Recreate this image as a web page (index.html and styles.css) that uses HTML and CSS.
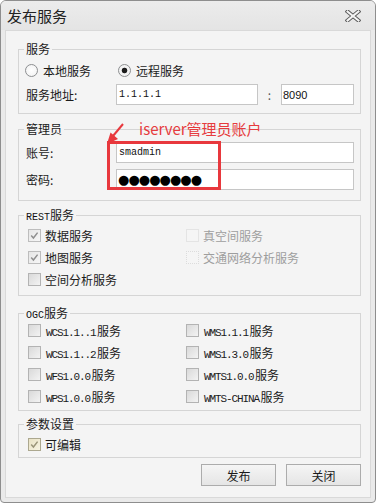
FILE: index.html
```html
<!DOCTYPE html>
<html>
<head>
<meta charset="utf-8">
<title>发布服务</title>
<link rel="stylesheet" href="styles.css">
</head>
<body>
<div class="window">
  <div class="titlebar">
    <span class="title">发布服务</span>
    <span class="close">
      <svg width="16" height="12" viewBox="0 0 16 12">
        <path d="M2.5 1.5 L13.5 10.5 M13.5 1.5 L2.5 10.5" fill="none" stroke="#5a5a5a" stroke-width="4" stroke-linecap="square"/>
        <path d="M2.5 1.5 L13.5 10.5 M13.5 1.5 L2.5 10.5" fill="none" stroke="#f4f4f4" stroke-width="2" stroke-linecap="square"/>
      </svg>
    </span>
  </div>
  <div class="client">
    <fieldset class="group g1">
      <legend>服务</legend>
      <div class="radio-row">
        <label class="opt w93"><span class="rb"></span>本地服务</label>
        <label class="opt"><span class="rb on"></span>远程服务</label>
      </div>
      <div class="field-row mt4">
        <span class="lbl">服务地址:</span>
        <span class="input ip mono">1.1.1.1</span>
        <span class="colon">:</span>
        <span class="input port">8090</span>
      </div>
    </fieldset>

    <fieldset class="group g2">
      <legend>管理员</legend>
      <div class="field-row mt5">
        <span class="lbl">账号:</span>
        <span class="input wide mono">smadmin</span>
      </div>
      <div class="field-row mt6">
        <span class="lbl">密码:</span>
        <span class="input wide pw">●●●●●●●●</span>
      </div>
    </fieldset>

    <fieldset class="group g3">
      <legend><span class="mono">REST</span>服务</legend>
      <div class="checks rest">
        <label class="opt"><span class="cb dis"><svg viewBox="0 0 11 11"><path d="M2.2 5.6 L4.4 8 L8.6 2.6" fill="none" stroke="#8e8e8e" stroke-width="1.5"/></svg></span>数据服务</label>
        <label class="opt off"><span class="cb faint"></span>真空间服务</label>
        <label class="opt"><span class="cb dis"><svg viewBox="0 0 11 11"><path d="M2.2 5.6 L4.4 8 L8.6 2.6" fill="none" stroke="#8e8e8e" stroke-width="1.5"/></svg></span>地图服务</label>
        <label class="opt off"><span class="cb faint dotted"></span>交通网络分析服务</label>
        <label class="opt"><span class="cb"></span>空间分析服务</label>
      </div>
    </fieldset>

    <fieldset class="group g4">
      <legend><span class="mono">OGC</span>服务</legend>
      <div class="checks ogc">
        <label class="opt g5"><span class="cb"></span><span class="txt"><span class="mono sm">WCS1.1..1</span>服务</span></label>
        <label class="opt g5"><span class="cb"></span><span class="txt"><span class="mono sm">WMS1.1.1</span>服务</span></label>
        <label class="opt g5"><span class="cb"></span><span class="txt"><span class="mono sm">WCS1.1..2</span>服务</span></label>
        <label class="opt g5"><span class="cb"></span><span class="txt"><span class="mono sm">WMS1.3.0</span>服务</span></label>
        <label class="opt g5"><span class="cb"></span><span class="txt"><span class="mono sm">WFS1.0.0</span>服务</span></label>
        <label class="opt g5"><span class="cb"></span><span class="txt"><span class="mono sm">WMTS1.0.0</span>服务</span></label>
        <label class="opt g5"><span class="cb"></span><span class="txt"><span class="mono sm">WPS1.0.0</span>服务</span></label>
        <label class="opt g5"><span class="cb"></span><span class="txt"><span class="mono sm">WMTS-CHINA</span>服务</span></label>
      </div>
    </fieldset>

    <fieldset class="group g5box">
      <legend>参数设置</legend>
      <div class="checks param">
        <label class="opt"><span class="cb beige"><svg viewBox="0 0 11 11"><path d="M2.2 5.6 L4.4 8 L8.6 2.6" fill="none" stroke="#9a9478" stroke-width="1.5"/></svg></span>可编辑</label>
      </div>
    </fieldset>

    <div class="buttons">
      <button class="btn">发布</button>
      <button class="btn">关闭</button>
    </div>
  </div>

  <svg class="note-arrow" width="30" height="30" viewBox="0 0 30 30">
    <path d="M23 6 L13 18" fill="none" stroke="#e8383d" stroke-width="2"/>
    <polygon points="7,26 10.5,14.5 18,21" fill="#e8383d"/>
  </svg>
  <span class="note-text">iserver管理员账户</span>
  <span class="note-box"></span>
</div>
</body>
</html>
```

FILE: styles.css
```css
* { box-sizing: border-box; }
html, body { margin: 0; padding: 0; }
body {
  width: 376px;
  height: 503px;
  background: #ffffff;
  font-family: "Noto Sans CJK SC", sans-serif;
  font-size: 12px;
  color: #1b1b1b;
}
.window {
  position: relative;
  width: 376px;
  height: 503px;
  border: 1px solid #8e8e8e;
  border-radius: 6px 6px 4px 4px;
  background: #eaeaea;
  display: flex;
  flex-direction: column;
  overflow: hidden;
}
.titlebar {
  height: 29px;
  flex: none;
  display: flex;
  align-items: center;
  justify-content: space-between;
  padding: 0 14px 0 6px;
  background: linear-gradient(#ececec, #e4e4e4);
}
.title { font-size: 15px; line-height: 18px; color: #222; }
.close { display: flex; margin-top: 1px; }
.client {
  flex: 1;
  margin: 0 4px 4px;
  border: 1px solid #d9d9d9;
  background: #f4f4f4;
  padding: 10px 9px 0 12px;
  display: flex;
  flex-direction: column;
}
.group {
  margin: 0;
  padding: 0;
  border: 1px solid #d5d5d5;
  min-width: 0;
}
.group legend {
  margin-left: 5px;
  padding: 0 2px;
  height: 16px;
  line-height: 16px;
  font-size: 12px;
}
.g1 { padding-bottom: 8px; }
.g2 { margin-top: 7px; padding-bottom: 10px; }
.g3 { margin-top: 6px; padding-bottom: 5px; }
.g4 { margin-top: 9px; padding-bottom: 3px; }
.g5box { margin-top: 5px; padding-bottom: 2px; }

.mono { font-family: "Liberation Mono", "Noto Sans CJK SC", monospace; font-size: 10px; color: #111; }
.mono.sm { font-size: 11px; letter-spacing: -1.1px; margin-right: 1.5px; color: #1a1a1a; }
.txt { white-space: nowrap; }

.radio-row {
  margin-top: 3px;
  height: 20px;
  display: flex;
  align-items: center;
  padding-left: 6px;
}
.opt { display: flex; align-items: center; gap: 4px; height: 22px; white-space: nowrap; }
.opt.g5 { gap: 5px; }
.w93 { width: 93px; }
.radio-row .opt { gap: 5px; height: 20px; }
.rb {
  width: 13px; height: 13px;
  border-radius: 50%;
  border: 1px solid #8d8f91;
  background: radial-gradient(circle at 50% 50%, #ffffff 0, #f0f0f0 100%);
  flex: none;
}
.rb.on {
  background: radial-gradient(circle at 50% 50%, #1c1c1c 0, #1c1c1c 2.4px, #f3f3f3 3.2px, #f3f3f3 100%);
}
.field-row {
  display: flex;
  align-items: center;
  height: 21px;
  padding-left: 7px;
}
.mt4 { margin-top: 4px; }
.mt5 { margin-top: 5px; }
.mt6 { margin-top: 6px; }
.lbl { width: 90px; flex: none; }
.input {
  height: 21px;
  border: 1px solid #c6c6c6;
  background: #ffffff;
  display: flex;
  align-items: center;
  padding-left: 2px;
  color: #111;
  flex: none;
}
.ip { width: 142px; }
.colon { width: 23px; text-align: center; color: #555; flex: none; }
.port { width: 73px; padding-left: 1px; font-family: "Liberation Sans", sans-serif; font-size: 11px; }
.wide { width: 238px; }
.pw {
  font-family: "DejaVu Sans", sans-serif;
  font-size: 13px;
  letter-spacing: -0.95px;
  color: #000;
  padding-left: 1px;
}

.checks {
  display: grid;
  grid-template-columns: 158px 1fr;
  grid-auto-rows: 22px;
  padding-left: 9px;
}
.rest { margin-top: 1px; }
.ogc { margin-top: -2px; }
.param { margin-top: 1px; }
.cb {
  width: 13px; height: 13px;
  border: 1px solid #b3b3b3;
  background: linear-gradient(135deg, #d9d9d9 0%, #f3f3f3 100%);
  flex: none;
  display: flex;
}
.cb svg { width: 11px; height: 11px; }
.cb.dis { background: linear-gradient(135deg, #e6e6e6 0%, #f6f6f6 100%); border-color: #bdbdbd; }
.cb.faint { border-color: #e4e4e4; background: #f5f5f5; }
.cb.dotted { border: 1px dotted #dcdcdc; }
.cb.beige { border-color: #aca88f; background: linear-gradient(135deg, #e9e2c4 0%, #f7f3e2 100%); }
.off { color: #9e9e9e; }

.buttons {
  margin-top: 6px;
  display: flex;
  justify-content: flex-end;
  gap: 10px;
}
.btn {
  width: 75px;
  height: 22px;
  border: 1px solid #acacac;
  border-radius: 0;
  background: linear-gradient(#f5f5f5, #e5e5e5);
  font-family: "Noto Sans CJK SC", sans-serif;
  font-size: 12px;
  color: #1b1b1b;
  padding: 0;
}

.note-arrow { position: absolute; left: 99px; top: 117px; }
.note-text {
  position: absolute;
  left: 138px;
  top: 120px;
  font-size: 15px;
  line-height: 16px;
  color: #e63b3d;
  white-space: nowrap;
}
.note-box {
  position: absolute;
  left: 106px;
  top: 140px;
  width: 114px;
  height: 49px;
  border: 3px solid #e8383d;
}
```
